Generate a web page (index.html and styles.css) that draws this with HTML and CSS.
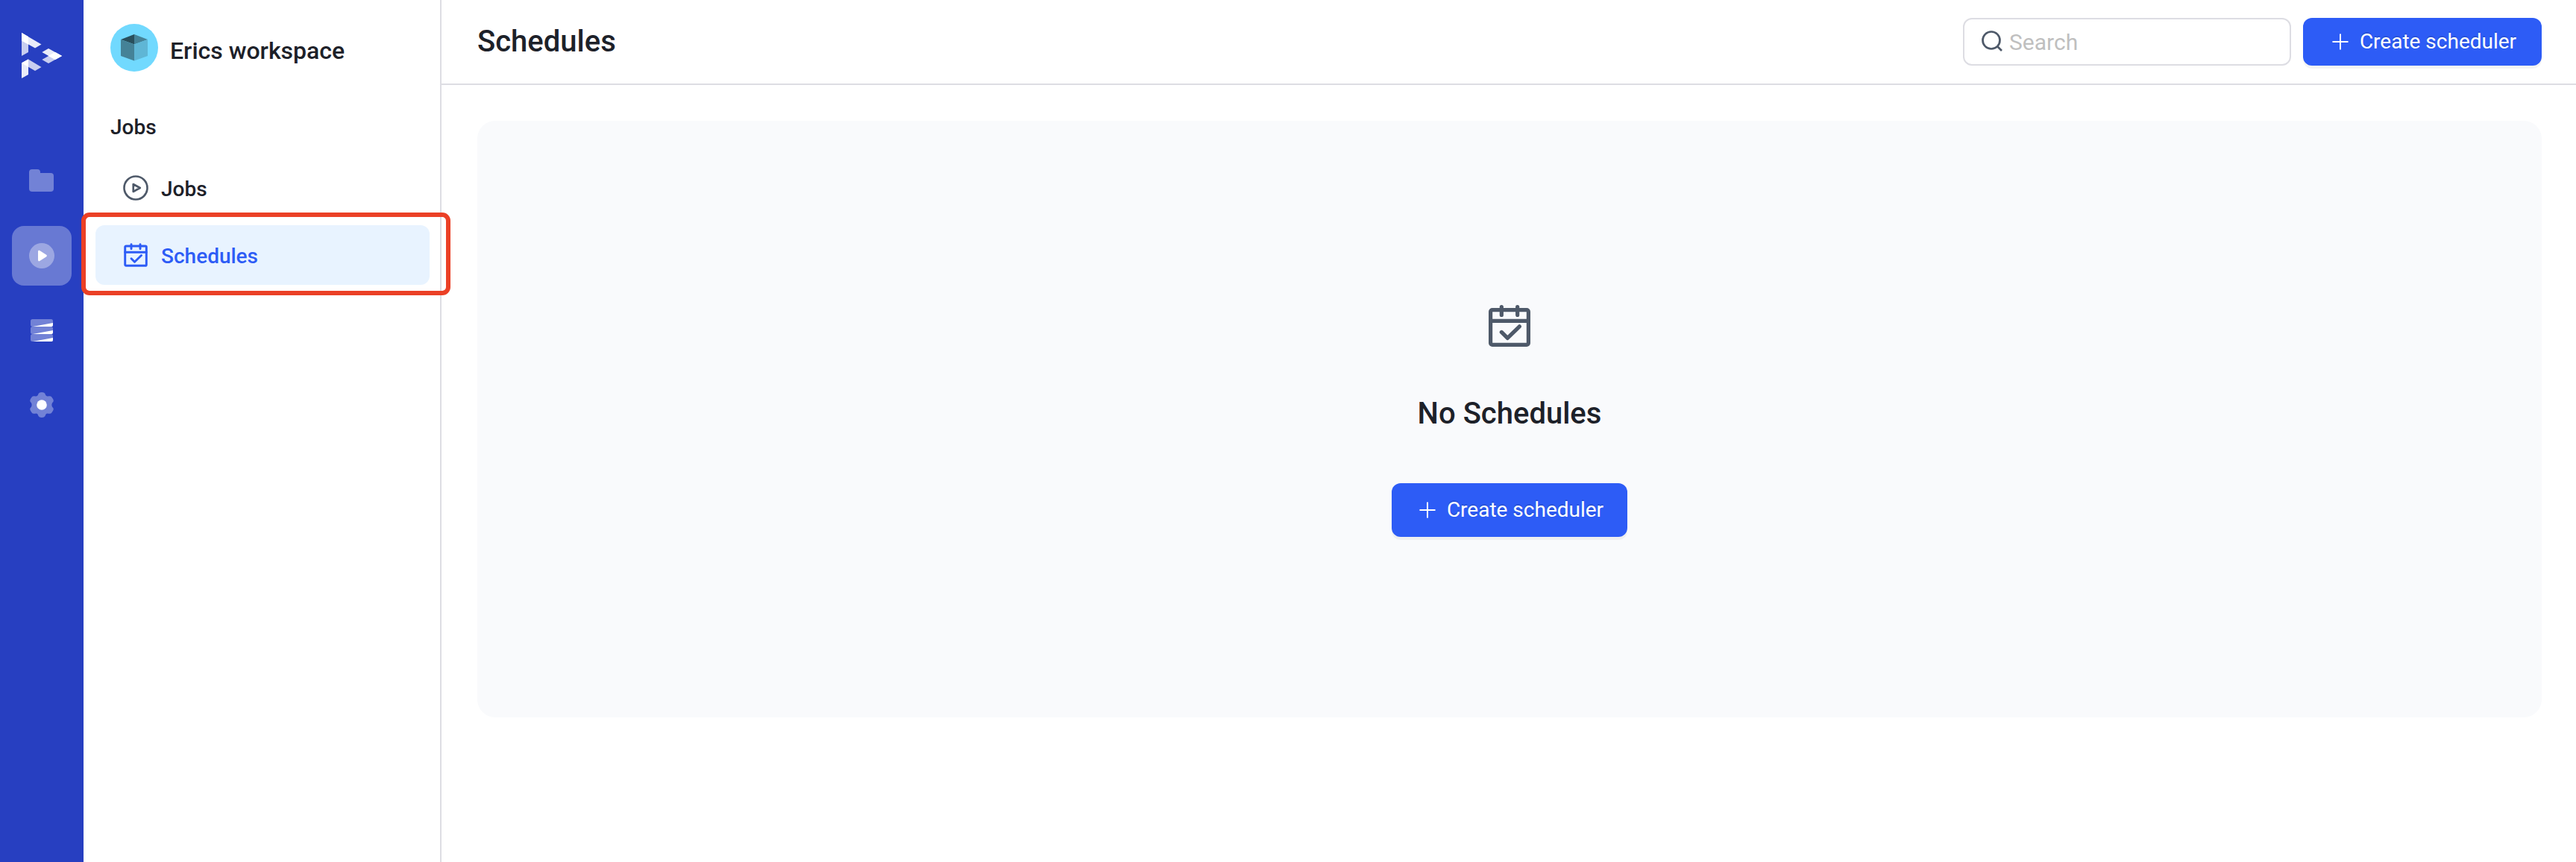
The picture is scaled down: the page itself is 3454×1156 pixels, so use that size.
FILE: index.html
```
<!DOCTYPE html>
<html lang="en">
<head>
  <meta charset="UTF-8">
  <meta name="viewport" content="width=device-width, initial-scale=1.0">
  <title>Schedules</title>
  <link rel="stylesheet" href="styles.css">
</head>
<body>

  <!-- Shared icons -->
  <svg class="sprite" width="0" height="0">
    <symbol id="calendar" viewBox="0 0 32 32">
      <g fill="none" stroke="currentColor" stroke-width="2.6" stroke-linecap="round" stroke-linejoin="round">
        <rect x="3.3" y="5.3" width="25.4" height="23.4" rx="1.2"/>
        <path d="M10.67 3.3V8.7M21.33 3.3V8.7M3.3 12.67H28.7M10.67 20.2L14.67 24.2L22.67 16.4"/>
      </g>
    </symbol>
    <symbol id="plus" viewBox="0 0 32 32">
      <path d="M16 6.2V25.8M6.2 16H25.8" fill="none" stroke="currentColor" stroke-width="2" stroke-linecap="round"/>
    </symbol>
  </svg>

  <div class="app">
    <!-- Icon rail -->
    <nav class="rail">
      <svg class="logo" width="54" height="62" viewBox="0 0 54 62" fill="#fff">
        <path opacity=".75" d="M0 0L9 5.3V26L0 31Z"/>
        <path opacity=".9" d="M0 0L26.5 15.5L18 20.5L0 10.5Z"/>
        <path d="M0 0L9 5.3V15.5L0 10.5Z"/>
        <path opacity=".75" d="M0 40.5L9 35.5L26.5 46L18 51Z"/>
        <path opacity=".9" d="M0 40.5L9 35.5V56L0 61Z"/>
        <path d="M0 40.5L9 35.5V45.5Z"/>
        <path opacity=".75" d="M27.3 36L45 26L54 31L36 41Z"/>
        <path opacity=".9" d="M27.3 26L36 21L54 31L45 36Z"/>
        <path d="M36 31L45 26L54 31L45 36Z"/>
      </svg>
      <a class="rail-item">
        <svg width="36" height="36" viewBox="0 0 36 36" fill="#fff">
          <path opacity=".35" d="M1 6a4 4 0 0 1 4-4h7a4 4 0 0 1 4 4v1H30a4 4 0 0 1 4 4V28a4 4 0 0 1-4 4H5a4 4 0 0 1-4-4Z"/>
        </svg>
      </a>
      <a class="rail-item active">
        <svg width="36" height="36" viewBox="0 0 36 36" fill="#fff">
          <circle opacity=".35" cx="18" cy="18" r="17"/>
          <path d="M13 12.2c0-1.3 1.2-1.9 2.2-1.2l9 5.8c.9.6.9 1.8 0 2.4l-9 5.8c-1 .7-2.2.1-2.2-1.2Z"/>
        </svg>
      </a>
      <a class="rail-item">
        <svg width="36" height="36" viewBox="0 0 36 36" fill="#fff">
          <g opacity=".35">
            <rect x="3" y="3" width="30" height="10" rx="2.5"/>
            <rect x="3" y="13" width="30" height="10" rx="2.5"/>
            <rect x="3" y="23" width="30" height="10" rx="2.5"/>
          </g>
          <path d="M6 13L33 8V11a2 2 0 0 1-2 2ZM6 23L33 18V21a2 2 0 0 1-2 2ZM6 33L33 28V31a2 2 0 0 1-2 2Z"/>
        </svg>
      </a>
      <a class="rail-item">
        <svg width="36" height="36" viewBox="0 0 36 36" fill="#fff">
          <path opacity=".35" d="M15.2 1.4Q18 .8 20.8 1.4Q22.7 2 23.2 5Q24.5 7 27 6.3Q30.3 5.8 31.3 7.5Q33 9.5 33.8 12Q34 13.8 31.9 15.6Q30.8 18 31.9 20.4Q34 22.2 33.8 24Q33 26.5 31.3 28.5Q30.3 30.2 27 29.7Q24.5 29 23.2 31Q22.7 34 20.8 34.6Q18 35.2 15.2 34.6Q13.3 34 12.8 31Q11.5 29 9 29.7Q5.7 30.2 4.7 28.5Q3 26.5 2.2 24Q2 22.2 4.1 20.4Q5.2 18 4.1 15.6Q2 13.8 2.2 12Q3 9.5 4.7 7.5Q5.7 5.8 9 6.3Q11.5 7 12.8 5Q13.3 2 15.2 1.4Z"/>
          <circle cx="18" cy="18" r="6.8"/>
        </svg>
      </a>
    </nav>

    <!-- Workspace sidebar -->
    <aside class="sidebar">
      <div class="workspace">
        <svg width="64" height="64" viewBox="0 0 64 64">
          <circle cx="32" cy="32" r="32" fill="#71d9fe"/>
          <path fill="#294f5c" d="M14 21L32 14V27.5Z"/>
          <path fill="#458297" d="M32 14L50 21L32 27.5Z"/>
          <path fill="#458297" d="M14 21L32 27.5V49.5L14 43Z"/>
          <path fill="#5fb6d5" d="M50 21L32 27.5V49.5L50 43Z"/>
        </svg>
        <span class="workspace-name">Erics workspace</span>
      </div>
      <h3 class="menu-title">Jobs</h3>
      <div class="menu">
        <a class="menu-item">
          <svg width="36" height="36" viewBox="0 0 36 36" fill="none" stroke="#4e5969" stroke-width="2.6">
            <circle cx="18" cy="18" r="15.5"/>
            <path d="M14.7 13V23L23.8 18Z" stroke-linejoin="round"/>
          </svg>
          <span>Jobs</span>
        </a>
        <a class="menu-item active">
          <svg width="36" height="36"><use href="#calendar"/></svg>
          <span>Schedules</span>
        </a>
      </div>
    </aside>

    <!-- Page -->
    <main class="main">
      <header class="header">
        <h1>Schedules</h1>
        <div class="actions">
          <label class="search">
            <svg width="32" height="32" viewBox="0 0 32 32" fill="none" stroke="#4e5969" stroke-width="2.7">
              <circle cx="15" cy="14" r="11.5"/>
              <path d="M23.2 22.2L29 28"/>
            </svg>
            <input type="text" placeholder="Search">
          </label>
          <button class="btn">
            <svg width="32" height="32"><use href="#plus"/></svg>
            <span>Create scheduler</span>
          </button>
        </div>
      </header>
      <section class="empty">
        <svg width="64" height="64"><use href="#calendar"/></svg>
        <h2>No Schedules</h2>
        <button class="btn btn-large">
          <svg width="32" height="32"><use href="#plus"/></svg>
          <span>Create scheduler</span>
        </button>
      </section>
    </main>
  </div>

  <!-- Highlight around the Schedules entry -->
  <div class="highlight"></div>

</body>
</html>
```
FILE: styles.css
```
* {
  box-sizing: border-box;
}

body {
  font-family: Roboto, 'Liberation Sans', sans-serif;
  margin: 0;
  background: #fff;
  color: #1d2129;
}

svg {
  display: block;
  flex-shrink: 0;
}

.sprite {
  position: absolute;
}

h1, h2, h3 {
  margin: 0;
  font-weight: 500;
}

.app {
  display: flex;
  height: 1156px;
}

/* Icon rail */
.rail {
  width: 112px;
  flex-shrink: 0;
  display: flex;
  flex-direction: column;
  align-items: center;
  gap: 20px;
  padding-top: 44px;
  background-color: #273fc1;
}

.logo {
  margin-bottom: 77px;
}

.rail-item {
  width: 80px;
  height: 80px;
  display: flex;
  align-items: center;
  justify-content: center;
  border-radius: 16px;
}

.rail-item.active {
  background-color: rgba(255, 255, 255, 0.3);
}

/* Sidebar */
.sidebar {
  width: 480px;
  flex-shrink: 0;
  padding: 32px 14px 0 16px;
  border-right: 2px solid #dddde3;
}

.workspace {
  display: flex;
  gap: 16px;
  height: 64px;
  padding-left: 20px;
}

.workspace-name {
  font-size: 32px;
  font-weight: 500;
  line-height: 38px;
  padding-top: 17px;
}

.menu-title {
  font-size: 28px;
  font-weight: 500;
  line-height: 40px;
  margin-top: 55px;
  padding-left: 20px;
}

.menu {
  display: flex;
  flex-direction: column;
  gap: 10px;
  margin-top: 21px;
}

.menu-item {
  display: flex;
  align-items: center;
  gap: 16px;
  height: 80px;
  padding-left: 36px;
  border-radius: 12px;
  font-size: 28px;
  font-weight: 500;
}

.menu-item span {
  padding-top: 2px;
}

.menu-item.active {
  background-color: #e8f3ff;
  color: #2d5cf6;
}

/* Page */
.main {
  flex: 1;
}

.header {
  display: flex;
  align-items: center;
  justify-content: space-between;
  height: 114px;
  padding: 0 46px 0 48px;
  border-bottom: 2px solid #dddde3;
}

.header h1 {
  font-size: 40px;
  padding-bottom: 2px;
}

.actions {
  display: flex;
  gap: 16px;
}

.search {
  display: flex;
  align-items: center;
  gap: 7px;
  width: 440px;
  height: 64px;
  padding: 0 21px;
  border: 2px solid #dddde3;
  border-radius: 12px;
}

.search input {
  flex: 1;
  min-width: 0;
  border: none;
  outline: none;
  padding: 1px 0 0;
  font-family: inherit;
  font-size: 30px;
}

.search input::placeholder {
  color: #bfbfbf;
}

.btn {
  display: flex;
  align-items: center;
  justify-content: center;
  gap: 10px;
  width: 320px;
  height: 64px;
  padding: 0;
  border: none;
  border-radius: 12px;
  background-color: #2d5cf6;
  box-shadow: 0 4px 0 rgba(0, 0, 0, 0.045);
  color: #fff;
  font-family: inherit;
  font-size: 28px;
  white-space: nowrap;
  text-shadow: 0 -2px 0 rgba(0, 0, 0, 0.12);
}

.btn span {
  padding-bottom: 1px;
}

.btn-large {
  width: 316px;
  height: 72px;
}

.empty {
  display: flex;
  flex-direction: column;
  align-items: center;
  height: 800px;
  margin: 48px 46px 0 48px;
  padding-top: 243px;
  border-radius: 24px;
  background-color: #f9fafc;
  color: #4e5969;
}

.empty h2 {
  margin: 62px 0 69px;
  font-size: 40px;
  line-height: 48px;
  color: #1d2129;
}

.highlight {
  position: absolute;
  left: 109px;
  top: 285px;
  width: 495px;
  height: 111px;
  border: 6px solid #eb4026;
  border-radius: 11px;
}
```
